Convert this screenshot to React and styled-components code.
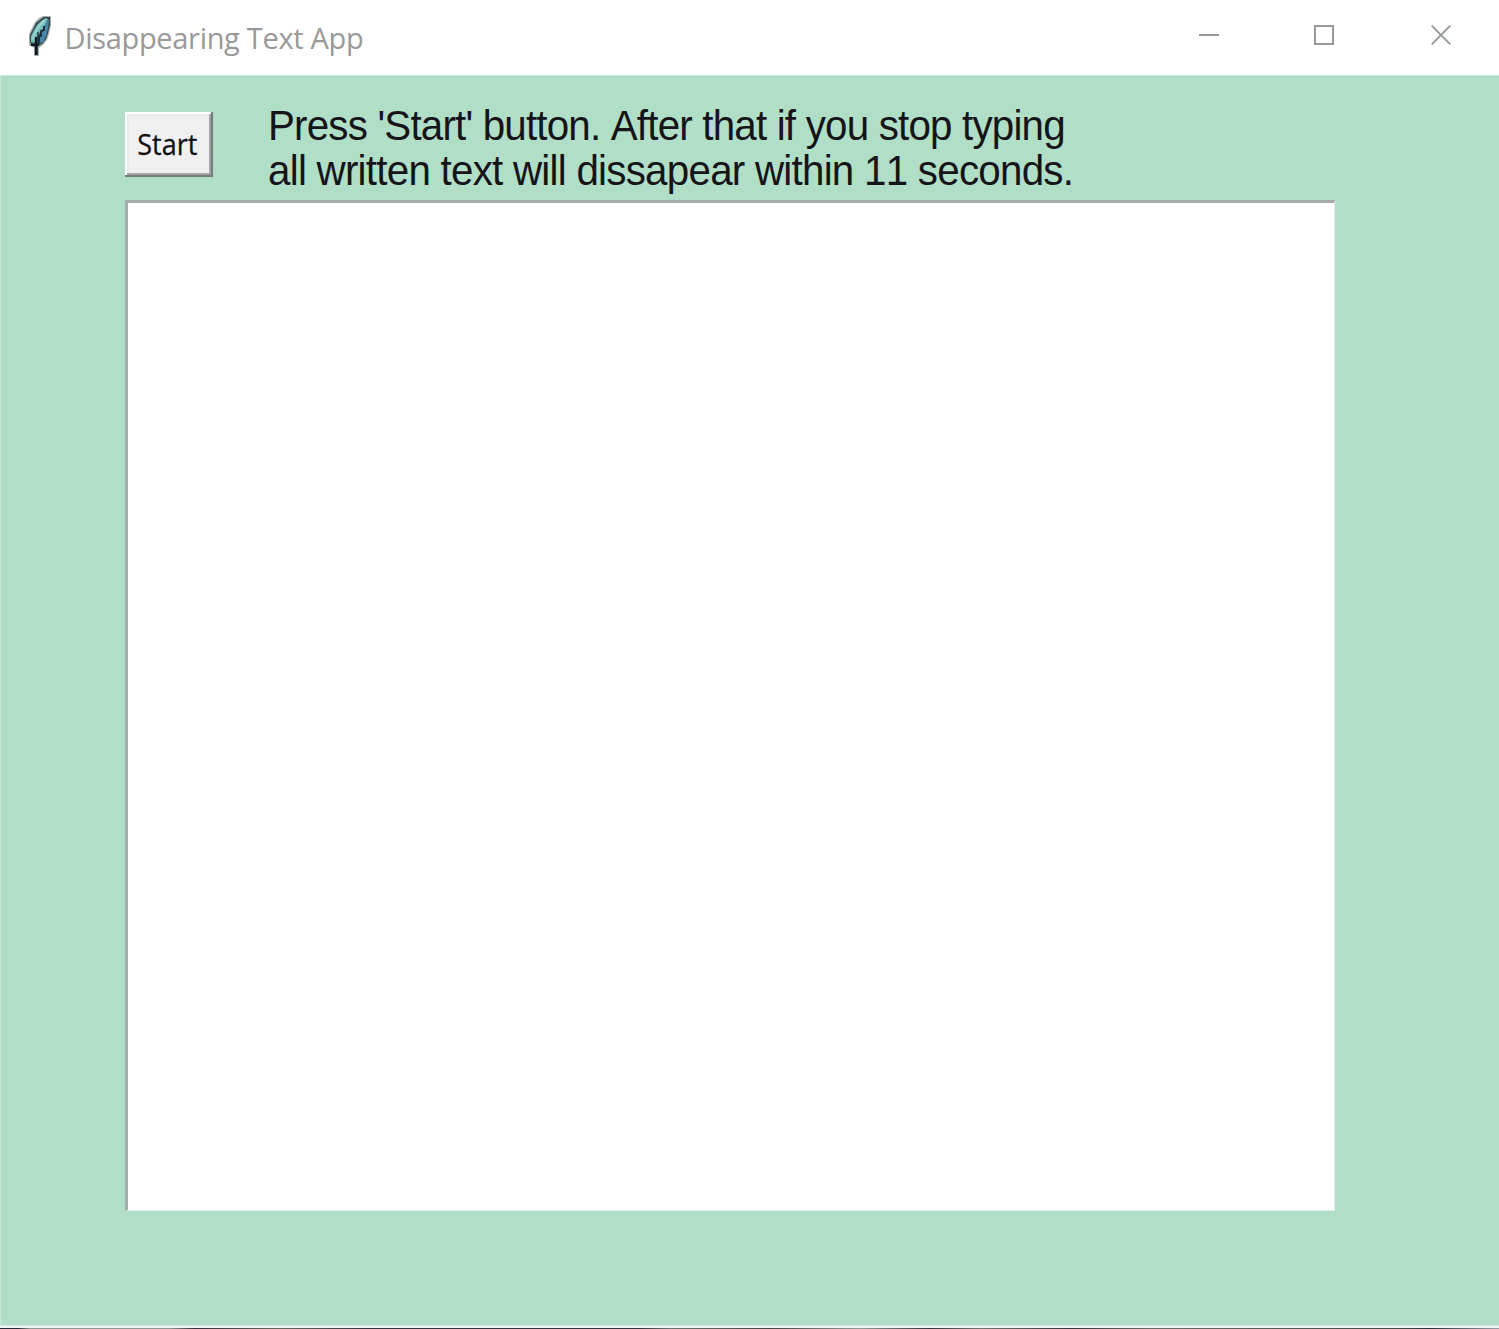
import React from "react";
import styled, { createGlobalStyle } from "styled-components";

const GlobalStyle = createGlobalStyle`
  * { box-sizing: border-box; }
  body { margin: 0; overflow: hidden; }
`;

const Window = styled.main`
  width: 1499px;
  height: 1329px;
  display: flex;
  flex-direction: column;
  background: #fff;
`;

const TitleBar = styled.header`
  height: 75px;
  flex: none;
  display: flex;
  align-items: flex-start;
  padding-left: 29px;
`;

const FeatherIcon = styled.svg`
  width: 22px;
  height: 40px;
  margin-top: 16px;
  flex: none;
`;

const Title = styled.h1`
  margin: 17px 0 0 13.5px;
  font: 400 29px/42px "Open Sans", "Noto Sans", sans-serif;
  letter-spacing: ${(p) => p.$tracking}px;
  color: #999;
  white-space: nowrap;
`;

const Controls = styled.nav`
  display: flex;
  margin-left: auto;
`;

const ControlButton = styled.button`
  width: ${(p) => p.$width}px;
  height: 70px;
  padding: 0;
  border: 0;
  background: transparent;
  display: grid;
  place-items: center;

  svg { width: 20px; height: 20px; display: block; overflow: visible; }
`;

const Client = styled.section`
  flex: 1;
  display: flex;
  flex-direction: column;
  padding: 33px 164px 0 124px;
  background: #b1dec7;
  border-top: 1px solid #c3e5d4;
  border-left: 1px solid #c5e6d6;
`;

const Toolbar = styled.div`
  height: 90px;
  display: flex;
  align-items: flex-start;
  gap: 55px;
`;

const StartButton = styled.button`
  width: 88px;
  height: 65px;
  margin-top: 3px;
  padding: 0 3px 2px 0;
  flex: none;
  display: grid;
  place-items: center;
  border: 0;
  background: #f0f0f0;
  box-shadow: inset -2px -2px #747d78, inset 2px 2px #fff, inset -4px -4px #a3a5a4, inset 4px 4px #e8ebe9;
  font: 400 29px/40px "Open Sans", "Noto Sans", sans-serif;
  color: #111;
`;

const ButtonLabel = styled.span`
  transform: scaleX(0.93);
  -webkit-text-stroke: 0.3px #111;
`;

const Instructions = styled.p`
  margin: -6px 0 0;
  font: 400 42px/45px "Liberation Sans", Arial, sans-serif;
  font-kerning: none;
  color: #151519;
`;

const Line = styled.span`
  display: block;
  white-space: nowrap;
  letter-spacing: ${(p) => p.$tracking}px;
  transform: scaleX(0.96);
  transform-origin: 0 50%;
`;

const Editor = styled.textarea`
  width: 1210px;
  height: 1011px;
  margin: 1px 0 0;
  padding: 4px;
  border: solid;
  border-width: 3px 1px 1px 3px;
  border-color: #a5aca9 #e0f2e9 #e0f2e9 #a5aca9;
  border-radius: 0;
  outline: 0;
  resize: none;
  background: #fff;
  font: 30px/36px "Liberation Sans", Arial, sans-serif;
`;

const WindowEdge = styled.div`
  height: 3px;
  flex: none;
  background: #f0f5f3;
  border-top: 1px solid #cce8db;
`;

const Backdrop = styled.div`
  height: 1px;
  flex: none;
  background: linear-gradient(90deg, #252a36 0 18px, #8e9793 30px 170px, #35303a 195px, #666960 280px, #30333c 370px 640px, #6c746f 670px, #444 770px, #929a96 860px, #34343b 930px, #707571 980px, #34383c 1070px, #666b66 1150px, #434a47 1400px, #28323b 1430px, #9a9fa6 1499px);
`;

function Feather() {
  return (
    <FeatherIcon viewBox="0 0 22 40" aria-hidden="true">
      <path d="M14 0h8v9l-2 9-2 6-4 5-4 3v8H5v-8l-5-3V18l3-6 3-6 4-4 4-2Z" fill="#a4aeab" />
      <path d="M15 1h6v8l-2 8-2 6-4 5-4 2v9H6v-8l-4-2-1-4v-6l3-6 3-6 5-4 3-2Z" fill="#35464a" />
      <path d="M17 2 12 5 8 9l-3 5-3 6v6l3 1 4-8 6-7 4-9-2-1Z" fill="#72bbbd" />
      <path d="m19 4-3 7-3 3-2 5-2 6-1 4 6-3 3-6 2-8 1-8Z" fill="#4687ab" />
      <path d="m16 4-5 5-4 6-2 4-2 5" fill="none" stroke="#a3d5cd" strokeWidth="1.8" />
      <path d="M15 10v4l-3 1v5l-2 1v6l-2 1" fill="none" stroke="#172b35" strokeWidth="1.8" />
      <path d="M7 21v18M2 29h8" fill="none" stroke="#11191c" strokeWidth="2.2" />
      <path d="M9 16v4" stroke="#23434b" strokeWidth="1.5" />
    </FeatherIcon>
  );
}

export default function App() {
  return (
    <>
      <GlobalStyle />
      <Window>
        <TitleBar>
          <Feather />
          <Title $tracking={-0.32}>Disappearing Text App</Title>
          <Controls>
            <ControlButton $width={114} aria-label="Minimize">
              <svg viewBox="0 0 20 20"><path d="M0 10h20" stroke="#999" strokeWidth="2" /></svg>
            </ControlButton>
            <ControlButton $width={116} aria-label="Maximize">
              <svg viewBox="0 0 20 20"><path d="M1 1h18v18H1Z" fill="none" stroke="#999" strokeWidth="2" /></svg>
            </ControlButton>
            <ControlButton $width={117} aria-label="Close">
              <svg viewBox="0 0 20 20"><path d="m.7.7 18.6 18.6M19.3.7.7 19.3" stroke="#949b99" strokeWidth="1.9" /></svg>
            </ControlButton>
          </Controls>
        </TitleBar>
        <Client>
          <Toolbar>
            <StartButton><ButtonLabel>Start</ButtonLabel></StartButton>
            <Instructions>
              <Line $tracking={-0.84}>Press 'Start' button. After that if you stop typing</Line>
              <Line $tracking={-0.78}>all written text will dissapear within 11 seconds.</Line>
            </Instructions>
          </Toolbar>
          <Editor aria-label="Text" spellCheck={false} />
        </Client>
        <WindowEdge />
        <Backdrop />
      </Window>
    </>
  );
}
